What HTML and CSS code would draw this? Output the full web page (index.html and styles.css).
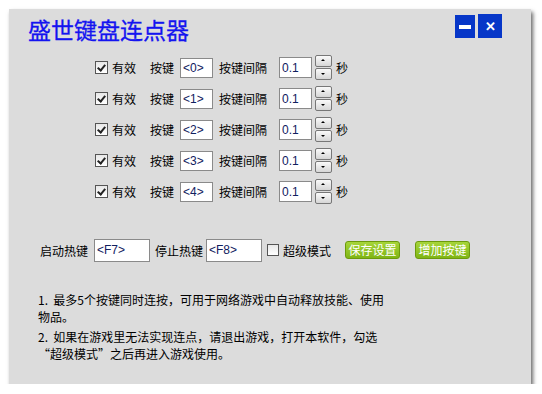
FILE: index.html
```html
<!DOCTYPE html>
<html lang="zh-CN">
<head>
    <meta charset="UTF-8">
    <title>盛世键盘连点器</title>
    <link rel="stylesheet" href="styles.css">
</head>
<body>

    <div class="window">

        <!-- 标题栏 -->
        <div class="titlebar">
            <div class="title">盛世键盘连点器</div>
            <div class="win-buttons">
                <button class="win-btn min"><span class="dash"></span></button>
                <button class="win-btn close">&#x2715;</button>
            </div>
        </div>

        <!-- 按键列表 -->
        <div class="key-list">
            <div class="key-row">
                <label class="valid"><span class="check on"></span>有效</label>
                <span class="lbl-key">按键</span>
                <input class="field key" value="<0>">
                <span class="lbl-gap">按键间隔</span>
                <input class="field interval" value="0.1">
                <span class="spin"><span class="up"></span><span class="down"></span></span>
                <span class="unit">秒</span>
            </div>
            <div class="key-row">
                <label class="valid"><span class="check on"></span>有效</label>
                <span class="lbl-key">按键</span>
                <input class="field key" value="<1>">
                <span class="lbl-gap">按键间隔</span>
                <input class="field interval" value="0.1">
                <span class="spin"><span class="up"></span><span class="down"></span></span>
                <span class="unit">秒</span>
            </div>
            <div class="key-row">
                <label class="valid"><span class="check on"></span>有效</label>
                <span class="lbl-key">按键</span>
                <input class="field key" value="<2>">
                <span class="lbl-gap">按键间隔</span>
                <input class="field interval" value="0.1">
                <span class="spin"><span class="up"></span><span class="down"></span></span>
                <span class="unit">秒</span>
            </div>
            <div class="key-row">
                <label class="valid"><span class="check on"></span>有效</label>
                <span class="lbl-key">按键</span>
                <input class="field key" value="<3>">
                <span class="lbl-gap">按键间隔</span>
                <input class="field interval" value="0.1">
                <span class="spin"><span class="up"></span><span class="down"></span></span>
                <span class="unit">秒</span>
            </div>
            <div class="key-row">
                <label class="valid"><span class="check on"></span>有效</label>
                <span class="lbl-key">按键</span>
                <input class="field key" value="<4>">
                <span class="lbl-gap">按键间隔</span>
                <input class="field interval" value="0.1">
                <span class="spin"><span class="up"></span><span class="down"></span></span>
                <span class="unit">秒</span>
            </div>
        </div>

        <!-- 热键设置 -->
        <div class="hotkeys">
            <span class="hk-label first">启动热键</span>
            <input class="field hk" value="<F7>">
            <span class="hk-label">停止热键</span>
            <input class="field hk" value="<F8>">
            <label class="super"><span class="check"></span>超级模式</label>
            <button class="green-btn">保存设置</button>
            <button class="green-btn">增加按键</button>
        </div>

        <!-- 说明 -->
        <div class="notes">
            <p>1.&nbsp; 最多5个按键同时连按，可用于网络游戏中自动释放技能、使用<br>物品。</p>
            <p>2.&nbsp; 如果在游戏里无法实现连点，请退出游戏，打开本软件，勾选<br>“超级模式”之后再进入游戏使用。</p>
        </div>

    </div>

</body>
</html>
```

FILE: styles.css
```css
body {
    margin: 0;
    background: #fff;
    font-family: "Noto Sans CJK SC", "Noto Sans", sans-serif;
    font-size: 12px;
    color: #000;
}

.window {
    width: 522px;
    height: 375px;
    margin: 9px 0 0 9px;
    background: #dcdcdc;
    box-shadow: 2px 3px 4px rgba(0, 0, 0, 0.6);
    box-sizing: border-box;
}

/* 标题栏 */
.titlebar {
    display: flex;
    justify-content: space-between;
    align-items: flex-start;
    padding: 5px 29px 0 19px;
    height: 38px;
    box-sizing: border-box;
}
.title {
    color: #1414f0;
    font-size: 23px;
    line-height: 30px;
    -webkit-text-stroke: 0.3px #1414f0;
}
.win-buttons {
    display: flex;
    gap: 3px;
    padding-top: 1px;
}
.win-btn {
    width: 20px;
    height: 23px;
    border: none;
    padding: 0;
    background: #0636c8;
    color: #fff;
    display: flex;
    align-items: center;
    justify-content: center;
    font-size: 13px;
    font-weight: bold;
}
.win-btn.close {
    width: 24px;
    height: 24px;
    margin-top: -1px;
}
.dash {
    width: 12px;
    height: 4px;
    background: #fff;
}

/* 按键列表 */
.key-list {
    padding: 5px 0 0 86px;
}
.key-row {
    display: flex;
    align-items: center;
    height: 31px;
}
.valid, .super {
    display: flex;
    align-items: center;
}
.valid {
    width: 55px;
}
.check {
    width: 11px;
    height: 11px;
    border: 1px solid #555;
    background: linear-gradient(#e8e8e8, #fff);
    margin-right: 4px;
    position: relative;
}
.check.on::after {
    content: "";
    position: absolute;
    left: 3px;
    top: 1px;
    width: 3px;
    height: 6px;
    border: solid #222;
    border-width: 0 2px 2px 0;
    transform: rotate(40deg);
}
.lbl-key {
    width: 30px;
}
.field {
    height: 20px;
    border: 1px solid #8a8a8a;
    background: #fff;
    padding: 0 2px;
    box-sizing: border-box;
    font-family: "Liberation Sans", sans-serif;
    font-size: 12px;
    color: #102060;
}
.field.key {
    width: 33px;
    margin-right: 6px;
}
.lbl-gap {
    width: 60px;
}
.field.interval {
    width: 33px;
    height: 21px;
}
.spin {
    display: flex;
    flex-direction: column;
    gap: 1px;
    margin: 0 4px 0 3px;
}
.spin span {
    width: 15px;
    height: 10px;
    border: 1px solid #777;
    border-radius: 2px;
    background: linear-gradient(#fafafa, #d6d6d6);
    position: relative;
}
.spin span::after {
    content: "";
    position: absolute;
    left: 5px;
    border-left: 2px solid transparent;
    border-right: 2px solid transparent;
}
.spin .up::after {
    top: 3px;
    border-bottom: 2px solid #000;
}
.spin .down::after {
    top: 4px;
    border-top: 2px solid #000;
}

/* 热键设置 */
.hotkeys {
    display: flex;
    align-items: center;
    padding: 31px 0 0 31px;
    height: 24px;
}
.hk-label {
    margin-right: 3px;
}
.hk-label.first {
    margin-right: 6px;
}
.field.hk {
    width: 56px;
    height: 23px;
    margin-right: 5px;
}
.super {
    margin-right: 14px;
}
.super .check {
    width: 10px;
    height: 10px;
}
.green-btn {
    height: 18px;
    width: 55px;
    padding: 0;
    border: 1px solid #6c9a0c;
    border-radius: 3px;
    background: linear-gradient(#a6d53a, #7fb514);
    color: #fff;
    font-family: "Noto Sans CJK SC", sans-serif;
    font-size: 12px;
    line-height: 16px;
    margin-right: 15px;
}

/* 说明 */
.notes {
    padding: 29px 0 0 29px;
    font-size: 12px;
    line-height: 17px;
}
.notes p {
    margin: 0 0 3px;
}
```
